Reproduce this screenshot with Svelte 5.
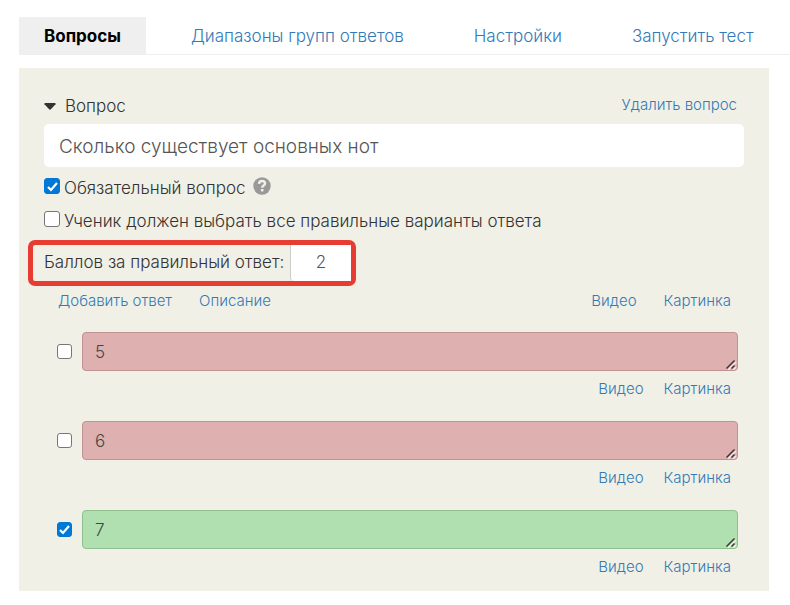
<script>
  const tabs = ['Вопросы', 'Диапазоны групп ответов', 'Настройки', 'Запустить тест'];
  let question = $state('Сколько существует основных нот');
  let required = $state(true);
  let allCorrect = $state(false);
  let points = $state('2');
  let answers = $state([
    { text: '5', correct: false },
    { text: '6', correct: false },
    { text: '7', correct: true }
  ]);
</script>

<main>
  <nav>
    {#each tabs as tab, i}
      <a href="#tab{i}" class:active={i === 0}>{tab}</a>
    {/each}
  </nav>

  <section class="panel">
    <header>
      <h2>
        <svg width="12" height="7" viewBox="0 0 12 7" aria-hidden="true"><path d="M1 0H11Q12 .3 11.5 1.2L6.9 6.3Q6 7 5.1 6.3L.5 1.2Q0 .3 1 0Z" fill="#333" /></svg>
        Вопрос
      </h2>
      <a class="small" href="#delete">Удалить вопрос</a>
    </header>

    <input class="question" type="text" aria-label="Вопрос" bind:value={question} />

    <div class="option">
      <input id="required" type="checkbox" bind:checked={required} />
      <label for="required">Обязательный вопрос</label>
      <svg class="help" width="18" height="18" viewBox="0 0 18 18" aria-hidden="true">
        <circle cx="9" cy="9" r="8.7" fill="#999" />
        <path d="M6 6.9C6.2 4.9 7.3 4.1 9 4.1C10.8 4.1 12 5.1 12 6.6C12 8.7 9.2 8.5 9.2 10.7" fill="none" stroke="#f0f0e6" stroke-width="2.5" />
        <rect x="7.9" y="12" width="2.6" height="2.4" fill="#f0f0e6" />
      </svg>
    </div>

    <div class="option">
      <input id="all" type="checkbox" bind:checked={allCorrect} />
      <label for="all">Ученик должен выбрать все правильные варианты ответа</label>
    </div>

    <div class="points">
      <label for="points">Баллов за правильный ответ:</label>
      <input id="points" type="text" bind:value={points} />
    </div>

    <div class="links small">
      <a href="#add">Добавить ответ</a>
      <a href="#description">Описание</a>
      <a class="push" href="#video">Видео</a>
      <a href="#picture">Картинка</a>
    </div>

    {#each answers as answer, i}
      <div class="answer">
        <input type="checkbox" aria-label="Правильный ответ {i + 1}" bind:checked={answer.correct} />
        <textarea rows="1" aria-label="Ответ {i + 1}" class:correct={answer.correct} bind:value={answer.text}></textarea>
      </div>
      <div class="links under small">
        <a class="push" href="#video{i}">Видео</a>
        <a href="#picture{i}">Картинка</a>
      </div>
    {/each}
  </section>
</main>

<style>
  :global(body) {
    margin: 0;
    background: #fff;
  }
  main {
    padding: 17px 0 14px 19px;
    font: 300 17px/24px Inter, 'Open Sans', sans-serif;
    color: #333;
  }
  main :global(*) {
    box-sizing: border-box;
  }
  a {
    color: #337ab7;
    text-decoration: none;
    white-space: nowrap;
  }
  input,
  textarea {
    margin: 0;
    font: inherit;
    color: #555;
  }
  .small {
    font-size: 15px;
    line-height: 20px;
  }
  nav {
    display: flex;
    gap: 20px;
    height: 38px;
    border-bottom: 1px solid #eee;
  }
  nav a {
    padding: 1px 25px 0;
    line-height: 36px;
  }
  nav a.active {
    background: #efefef;
    color: #000;
    font-weight: 700;
  }
  .panel {
    display: flex;
    flex-direction: column;
    margin: 13px 21px 0 0;
    padding: 25px 25px 13px;
    background: #f0f0e6;
  }
  header {
    display: flex;
    justify-content: space-between;
    align-items: center;
    height: 24px;
    padding-right: 7px;
    margin-bottom: 7px;
  }
  h2 {
    display: flex;
    align-items: center;
    gap: 9px;
    margin: 0;
    padding-top: 2px;
    font: inherit;
  }
  .question {
    width: 100%;
    height: 43px;
    padding: 2px 15px 0;
    border: 0;
    border-radius: 5px;
    background: #fff;
    font-size: 19px;
  }
  .option {
    display: flex;
    align-items: center;
    gap: 4px;
    height: 33px;
  }
  .option:first-of-type {
    margin-top: 4px;
  }
  .help {
    margin: 0 0 3px 3px;
  }
  input[type='checkbox'] {
    appearance: none;
    flex: none;
    width: 15px;
    height: 15px;
    border: 1px solid #767676;
    border-radius: 3px;
    background: #fff;
  }
  .option input[type='checkbox'] {
    width: 16px;
    height: 16px;
    margin-bottom: 3px;
  }
  input[type='checkbox']:checked {
    border-color: #0078d7;
    background: #0078d7 url("data:image/svg+xml,%3Csvg xmlns='http://www.w3.org/2000/svg' viewBox='0 0 13 13'%3E%3Cpath d='M2 7L5 10L11 3' fill='none' stroke='white' stroke-width='2.2'/%3E%3C/svg%3E") center / 13px 13px;
  }
  .points {
    display: flex;
    align-items: center;
    justify-content: space-between;
    align-self: flex-start;
    width: 328px;
    height: 46px;
    margin: 3px 0 0 -16px;
    padding-left: 11px;
    border: 5px solid #e63c32;
    border-radius: 7px;
  }
  .points label {
    padding-bottom: 2px;
  }
  .points input {
    width: 61px;
    height: 36px;
    padding: 0 0 2px;
    border: 0;
    border-left: 1px solid #ccc;
    border-radius: 0 0 0 4px;
    background: #fff;
    text-align: center;
  }
  .links {
    display: flex;
    gap: 27px;
    margin-top: 5px;
    padding: 0 13px 0 14px;
  }
  .push {
    margin-left: auto;
  }
  .under {
    gap: 20px;
    margin: 8px 0 1px;
  }
  .answer {
    display: flex;
    align-items: center;
    gap: 10px;
    margin-top: 21px;
    padding: 0 6px 0 13px;
  }
  textarea {
    flex: 1;
    height: 39px;
    padding: 7px 12px;
    border: 1px solid #c09292;
    border-radius: 4px;
    background: #deb0b0;
    color: #444;
    resize: vertical;
    overflow: hidden;
  }
  textarea::-webkit-resizer {
    background: url("data:image/svg+xml,%3Csvg xmlns='http://www.w3.org/2000/svg' viewBox='0 0 15 15'%3E%3Cpath d='M5 14L13 6M10 14L13 11' fill='none' stroke='white' stroke-opacity='.7' stroke-width='1.5' transform='translate(1 1)'/%3E%3Cpath d='M4.5 13.5L12.5 5.5M9.5 13.5L12.5 10.5' fill='none' stroke='%23433' stroke-width='1.5'/%3E%3C/svg%3E") right bottom / 15px 15px no-repeat;
  }
  textarea.correct {
    border-color: #8fc08f;
    background: #b0e0b0;
  }
</style>
